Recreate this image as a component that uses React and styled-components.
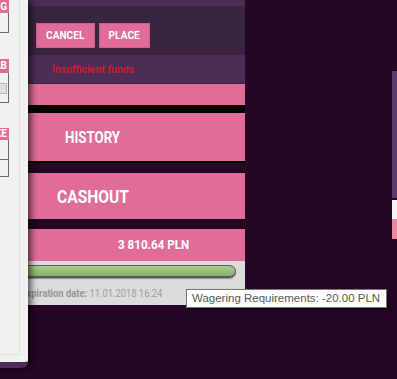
import React from "react";
import styled, { createGlobalStyle } from "styled-components";

const GlobalStyle = createGlobalStyle`
  html, body { margin: 0; padding: 0; background: #250624; }
  body { font-family: Roboto, "Liberation Sans", sans-serif; overflow: hidden; }
  * { box-sizing: border-box; }
`;

const Page = styled.div`
  position: relative;
  display: flex;
  width: 397px;
  height: 379px;
  background: #250624;
`;

/* ---------- left drawer (overlay) ---------- */
const Drawer = styled.aside`
  position: absolute;
  left: 0;
  top: 0;
  z-index: 2;
  width: 28px;
  height: 368px;
  background: #f1f1f1;
  border-bottom: 6px solid #4b2d55;
  border-bottom-right-radius: 7px;
  box-shadow: 3px 0 7px rgba(0, 0, 0, 0.65);
`;

const DrawerFrame = styled.div`
  width: 20px;
  height: 355px;
  border-right: 1px solid #e2e2e2;
  border-bottom: 1px solid #e2e2e2;
  display: flex;
  flex-direction: column;
`;

const MiniTable = styled.div`
  width: 9px;
  margin-top: ${(p) => p.$top}px;
  display: flex;
  flex-direction: column;
`;

const MiniHead = styled.div`
  height: ${(p) => p.$h}px;
  background: #e06c98;
  color: #fff;
  font: 700 10px/${(p) => p.$h}px Roboto, sans-serif;
  text-align: right;
  padding-right: 2px;
  white-space: nowrap;
  overflow: hidden;
  direction: rtl;
`;

const MiniRow = styled.div`
  height: ${(p) => p.$h}px;
  border-right: 1px solid #6a6a6a;
  border-bottom: 1px solid #6a6a6a;
  padding-top: ${(p) => p.$pad || 0}px;
`;

const MiniInput = styled.div`
  width: 7px;
  height: 11px;
  background: #dedede;
  border: 1px solid #b8b8b8;
  border-left: none;
`;

/* ---------- main column ---------- */
const Main = styled.main`
  width: 232px;
  margin-left: 13px;
  display: flex;
  flex-direction: column;
`;

const TopStrip = styled.div`
  height: 6px;
  background: #4a2e55;
`;

const ButtonBar = styled.div`
  height: 49px;
  background: #3a2540;
  display: flex;
  align-items: flex-start;
  gap: 4px;
  padding: 17px 0 0 23px;
`;

const Button = styled.button`
  height: 25px;
  padding: 0 9px;
  border: 1px solid #cf5f8b;
  background: #e06c98;
  color: #fff;
  font: 700 10px/23px Roboto, sans-serif;
  letter-spacing: 0.1px;
  cursor: pointer;
`;

const MessageRow = styled.div`
  height: 29px;
  background: #4b2d55;
  border-bottom: 1px solid #3b2444;
  display: flex;
  align-items: center;
  padding-left: 39px;
  color: #c4202d;
  font: 700 10.4px Roboto, sans-serif;
`;

const Bar = styled.div`
  height: ${(p) => p.$h}px;
  background: ${(p) => p.$bg};
`;

const PinkBlock = styled.div`
  height: ${(p) => p.$h}px;
  margin-top: ${(p) => p.$mt || 0}px;
  background: #e16c98;
  border-bottom: ${(p) => (p.$edge ? "2px solid #000" : "none")};
  display: flex;
  align-items: center;
  padding-left: ${(p) => p.$pl}px;
`;

const Label = styled.span`
  display: inline-block;
  color: #fff;
  font-family: Roboto, sans-serif;
  font-weight: 700;
  font-size: ${(p) => p.$size}px;
  transform: scaleX(${(p) => p.$sx || 1});
  transform-origin: left center;
  white-space: nowrap;
`;

const InfoPanel = styled.div`
  height: 44px;
  background: #dddbdc;
  padding: 4px 9px 0 0;
  display: flex;
  flex-direction: column;
`;

const Progress = styled.div`
  height: 13px;
  border-radius: 7px;
  border: 1px solid #5b5b5b;
  border-bottom-width: 2px;
  background: linear-gradient(#a9cd8c, #93bc76 60%, #86ae69);
  box-shadow: 0 1px 1px rgba(0, 0, 0, 0.35);
`;

const Expiry = styled.div`
  margin-top: 9px;
  padding-left: 10px;
  font-family: Roboto, sans-serif;
  font-size: 11.3px;
  color: #9e9e9e;
  white-space: nowrap;
  transform: scaleX(0.83);
  transform-origin: left center;
  b { font-weight: 700; color: #979797; }
`;

const Filler = styled.div`
  flex: 1;
`;

/* ---------- right edge (partially visible panel) ---------- */
const EdgePanel = styled.div`
  width: 5px;
  margin-top: 71px;
  display: flex;
  flex-direction: column;
`;

const EdgePart = styled.div`
  height: ${(p) => p.$h}px;
  margin-top: ${(p) => p.$mt || 0}px;
  background: ${(p) => p.$bg};
`;

/* ---------- tooltip (overlay) ---------- */
const Tooltip = styled.div`
  position: absolute;
  left: 186px;
  top: 289px;
  z-index: 3;
  height: 19px;
  padding: 0 6px 0 5px;
  background: #fff;
  border: 1px solid #767676;
  box-shadow: 2px 2px 3px rgba(0, 0, 0, 0.35);
  color: #575757;
  font: 400 11.5px/17px "Liberation Sans", Arial, sans-serif;
  white-space: nowrap;
`;

export default function App() {
  return (
    <>
      <GlobalStyle />
      <Page>
        <Drawer>
          <DrawerFrame>
            <MiniTable $top={0}>
              <MiniHead $h={13}>SETTING</MiniHead>
              <MiniRow $h={20} />
            </MiniTable>
            <MiniTable $top={26}>
              <MiniHead $h={14}>TAB</MiniHead>
              <MiniRow $h={30} $pad={10}>
                <MiniInput />
              </MiniRow>
            </MiniTable>
            <MiniTable $top={25}>
              <MiniHead $h={12}>STAKE</MiniHead>
              <MiniRow $h={20} />
              <MiniRow $h={17} />
            </MiniTable>
          </DrawerFrame>
        </Drawer>

        <Main>
          <TopStrip />
          <ButtonBar>
            <Button>CANCEL</Button>
            <Button>PLACE</Button>
          </ButtonBar>
          <MessageRow>Insufficient funds</MessageRow>
          <Bar $h={21} $bg="#e16c98" />
          <Bar $h={8} $bg="#000" />
          <PinkBlock $h={50} $pl={52} $edge>
            <Label $size={16} $sx={0.83}>HISTORY</Label>
          </PinkBlock>
          <PinkBlock $h={46} $mt={10} $pl={44}>
            <Label $size={19} $sx={0.82}>CASHOUT</Label>
          </PinkBlock>
          <PinkBlock $h={32} $mt={10} $pl={105}>
            <Label $size={12} $sx={0.97}>3 810.64 PLN</Label>
          </PinkBlock>
          <InfoPanel>
            <Progress />
            <Expiry>
              <b>Expiration date:</b> 11.01.2018 16:24
            </Expiry>
          </InfoPanel>
        </Main>

        <Filler />

        <EdgePanel>
          <EdgePart $h={127} $bg="#5a3c6b" />
          <EdgePart $h={19} $mt={2} $bg="#f3f3f3" />
          <EdgePart $h={20} $bg="#e78aa0" />
        </EdgePanel>

        <Tooltip>Wagering Requirements: -20.00 PLN</Tooltip>
      </Page>
    </>
  );
}
